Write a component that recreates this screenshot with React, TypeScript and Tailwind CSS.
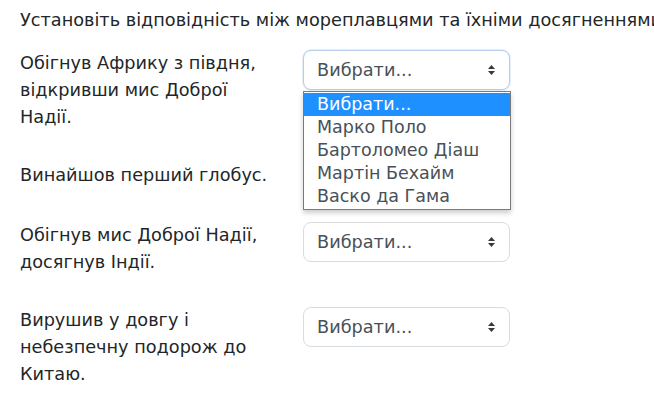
import React from 'react'

const rows: string[][] = [
    ['Обігнув Африку з півдня,', 'відкривши мис Доброї', 'Надії.'],
    ['Винайшов перший глобус.'],
    ['Обігнув мис Доброї Надії,', 'досягнув Індії.'],
    ['Вирушив у довгу і', 'небезпечну подорож до', 'Китаю.'],
]

const options = ['Вибрати...', 'Марко Поло', 'Бартоломео Діаш', 'Мартін Бехайм', 'Васко да Гама']

function Carets() {
    return (
        <svg width="9" height="12" viewBox="0 0 9 12" className="shrink-0">
            <path d="M4.5 1 L8 5 L1 5 Z" fill="#343a40" />
            <path d="M4.5 11 L8 7 L1 7 Z" fill="#343a40" />
        </svg>
    )
}

function Select({ focused, hidden }: { focused?: boolean; hidden?: boolean }) {
    return (
        <div
            className={
                'w-[207px] h-10 rounded-lg border bg-white flex items-center justify-between pl-[13px] pr-[13px] text-[#495057] ' +
                (focused ? 'border-[#b8cdea] shadow-[0_0_0_1px_rgba(180,205,240,0.35)] ' : 'border-[#d9dcdf] ') +
                (hidden ? 'invisible' : '')
            }
        >
            <span>Вибрати...</span>
            <Carets />
        </div>
    )
}

export default function App() {
    return (
        <div className="w-[654px] h-[395px] overflow-hidden bg-white text-[#222629] text-[17.7px] leading-[27px] font-['DejaVu_Sans',sans-serif]">
            <div className="pl-5 pt-[7px] whitespace-nowrap">
                Установіть відповідність між мореплавцями та їхніми досягненнями.
            </div>

            <div className="relative mt-4 pl-5">
                {rows.map((lines, i) => (
                    <div key={i} className="flex items-start">
                        <div className="w-[283px] pb-[31px]">
                            {lines.map(l => (
                                <div key={l} className="whitespace-nowrap">{l}</div>
                            ))}
                        </div>
                        <div className="mb-5">
                            {/* second select sits under the open list */}
                            <Select focused={i === 0} hidden={i === 1} />
                        </div>
                    </div>
                ))}

                {/* open dropdown list of the first select */}
                <div className="absolute left-[303px] top-[41px] w-[208px] bg-white border border-[#7a7a7a] shadow-[0_3px_5px_rgba(0,0,0,0.2)] py-px text-[17.5px]">
                    {options.map((o, i) => (
                        <div
                            key={o}
                            className={
                                'h-[23px] leading-[23px] pl-[13px] ' +
                                (i === 0 ? 'bg-[#1e90ff] text-white' : 'text-[#495057]')
                            }
                        >
                            {o}
                        </div>
                    ))}
                </div>
            </div>
        </div>
    )
}
